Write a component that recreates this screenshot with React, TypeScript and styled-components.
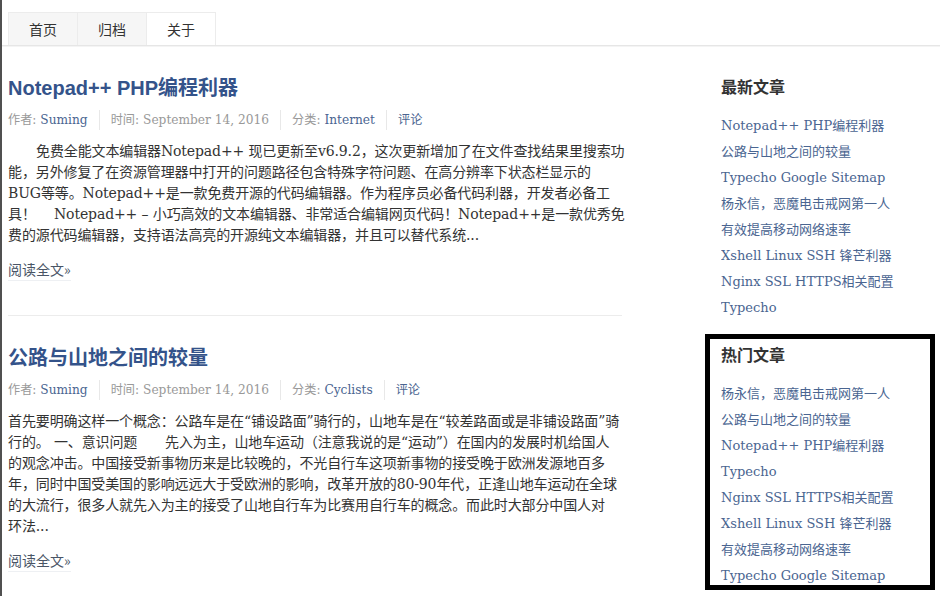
import styled, { createGlobalStyle } from 'styled-components';

const GlobalStyle = createGlobalStyle`
  html, body {
    margin: 0;
    padding: 0;
    background: #fff;
  }
  body {
    border-left: 2px solid #505050;
    font-family: "Liberation Serif", "Noto Sans CJK SC", serif;
    color: #333;
  }
  a {
    text-decoration: none;
  }
`;

const Page = styled.div`
  min-height: 100vh;
  box-sizing: border-box;
  box-shadow: inset 0 -3px 0 #8c8c8c;
`;

const NavBar = styled.div`
  display: flex;
  padding: 12px 0 0 6px;
  border-bottom: 1px solid #e6e6e6;
  box-shadow: 0 1px 0 #f4f4f4;
`;

const Tab = styled.a<{ $active?: boolean }>`
  display: block;
  width: 68px;
  height: 32px;
  line-height: 33px;
  text-align: center;
  font-family: "Noto Sans CJK SC", sans-serif;
  font-size: 14px;
  color: #333;
  background: ${p => (p.$active ? '#fff' : '#f6f6f6')};
  border: 1px solid #ececec;
  border-bottom: none;
  margin-right: -1px;
  margin-bottom: ${p => (p.$active ? '-1px' : '0')};
`;

const Layout = styled.div`
  display: flex;
  align-items: flex-start;
  padding-left: 6px;
`;

const Main = styled.main`
  width: 614px;
  flex-shrink: 0;
`;

const Post = styled.article<{ $divider?: boolean }>`
  padding: 27px 0 34px;
  border-bottom: ${p => (p.$divider ? '1px solid #ececec' : 'none')};
`;

const PostTitle = styled.h2`
  margin: 0;
  font-family: "Liberation Sans", "Noto Sans CJK SC", sans-serif;
  font-size: 20px;
  line-height: 30px;
  font-weight: bold;
  color: #34538a;
`;

const Meta = styled.div`
  display: flex;
  margin-top: 7px;
  font-family: "DejaVu Serif", "Noto Sans CJK SC", serif;
  font-size: 12.2px;
  line-height: 20px;
  color: #999;
`;

const MetaItem = styled.span`
  padding: 0 11px;
  border-left: 1px solid #e8e8e8;

  &:first-child {
    padding-left: 0;
    border-left: none;
  }
`;

const MetaLink = styled.a`
  color: #4a6591;
`;

const Excerpt = styled.p`
  margin: 11px 0 0;
  font-family: "DejaVu Serif", "Noto Sans CJK SC", serif;
  font-size: 14px;
  line-height: 21px;
  letter-spacing: -0.12px;
  color: #333;
`;

// the excerpt is stored pre-wrapped, one entry per line
const ExcerptLine = styled.span<{ $indent?: boolean }>`
  display: block;
  white-space: pre;
  padding-left: ${p => (p.$indent ? '28px' : '0')};
`;

const ReadMore = styled.a`
  display: inline-block;
  margin-top: 13px;
  font-family: "Noto Sans CJK SC", sans-serif;
  font-size: 14px;
  line-height: 21px;
  color: #4a5566;
  border-bottom: 1px solid #eef0f3;
`;

const Sidebar = styled.aside`
  margin-left: 99px;
  width: 210px;
`;

const Widget = styled.section<{ $boxed?: boolean }>`
  box-sizing: border-box;
  margin-left: ${p => (p.$boxed ? '-16px' : '0')};
  margin-top: ${p => (p.$boxed ? '13px' : '29px')};
  width: ${p => (p.$boxed ? '230px' : 'auto')};
  height: ${p => (p.$boxed ? '256px' : 'auto')};
  padding: ${p => (p.$boxed ? '4px 0 0 11px' : '0')};
  border: ${p => (p.$boxed ? '5px solid #000' : 'none')};
  overflow: hidden;
`;

const WidgetTitle = styled.h3`
  margin: 0 0 16px;
  font-family: "Noto Sans CJK SC", sans-serif;
  font-size: 16px;
  line-height: 22px;
  font-weight: bold;
  color: #333;
`;

const LinkList = styled.ul`
  list-style: none;
  margin: 0;
  padding: 0;
`;

const LinkItem = styled.li`
  height: 26px;
  font-family: "DejaVu Serif", "Noto Sans CJK SC", serif;
  font-size: 13px;
  line-height: 26px;
  white-space: nowrap;
`;

const SideLink = styled.a`
  color: #4a6591;
`;

const tabs = [
  { label: '首页' },
  { label: '归档' },
  { label: '关于', active: true },
];

const posts = [
  {
    title: 'Notepad++ PHP编程利器',
    category: 'Internet',
    indent: true,
    lines: [
      '免费全能文本编辑器Notepad++ 现已更新至v6.9.2，这次更新增加了在文件查找结果里搜索功',
      '能，另外修复了在资源管理器中打开的问题路径包含特殊字符问题、在高分辨率下状态栏显示的',
      'BUG等等。Notepad++是一款免费开源的代码编辑器。作为程序员必备代码利器，开发者必备工',
      '具！　 Notepad++ – 小巧高效的文本编辑器、非常适合编辑网页代码！Notepad++是一款优秀免',
      '费的源代码编辑器，支持语法高亮的开源纯文本编辑器，并且可以替代系统...',
    ],
  },
  {
    title: '公路与山地之间的较量',
    category: 'Cyclists',
    indent: false,
    lines: [
      '首先要明确这样一个概念：公路车是在“铺设路面”骑行的，山地车是在“较差路面或是非铺设路面”骑',
      '行的。 一、意识问题　　先入为主，山地车运动（注意我说的是“运动”）在国内的发展时机给国人',
      '的观念冲击。中国接受新事物历来是比较晚的，不光自行车这项新事物的接受晚于欧洲发源地百多',
      '年，同时中国受美国的影响远远大于受欧洲的影响，改革开放的80-90年代，正逢山地车运动在全球',
      '的大流行，很多人就先入为主的接受了山地自行车为比赛用自行车的概念。而此时大部分中国人对',
      '环法...',
    ],
  },
];

const recent = [
  'Notepad++ PHP编程利器',
  '公路与山地之间的较量',
  'Typecho Google Sitemap',
  '杨永信，恶魔电击戒网第一人',
  '有效提高移动网络速率',
  'Xshell Linux SSH 锋芒利器',
  'Nginx SSL HTTPS相关配置',
  'Typecho',
];

const popular = [
  '杨永信，恶魔电击戒网第一人',
  '公路与山地之间的较量',
  'Notepad++ PHP编程利器',
  'Typecho',
  'Nginx SSL HTTPS相关配置',
  'Xshell Linux SSH 锋芒利器',
  '有效提高移动网络速率',
  'Typecho Google Sitemap',
];

export default function App() {
  return (
    <Page>
      <GlobalStyle />
      <NavBar>
        {tabs.map(t => (
          <Tab key={t.label} href="#" $active={t.active}>
            {t.label}
          </Tab>
        ))}
      </NavBar>

      <Layout>
        <Main>
          {posts.map((post, i) => (
            <Post key={post.title} $divider={i < posts.length - 1}>
              <PostTitle>{post.title}</PostTitle>
              <Meta>
                <MetaItem>
                  作者: <MetaLink href="#">Suming</MetaLink>
                </MetaItem>
                <MetaItem>时间: September 14, 2016</MetaItem>
                <MetaItem>
                  分类: <MetaLink href="#">{post.category}</MetaLink>
                </MetaItem>
                <MetaItem>
                  <MetaLink href="#">评论</MetaLink>
                </MetaItem>
              </Meta>
              <Excerpt>
                {post.lines.map((line, j) => (
                  <ExcerptLine key={j} $indent={post.indent && j === 0}>
                    {line}
                  </ExcerptLine>
                ))}
              </Excerpt>
              <ReadMore href="#">阅读全文»</ReadMore>
            </Post>
          ))}
        </Main>

        <Sidebar>
          <Widget>
            <WidgetTitle>最新文章</WidgetTitle>
            <LinkList>
              {recent.map(item => (
                <LinkItem key={item}>
                  <SideLink href="#">{item}</SideLink>
                </LinkItem>
              ))}
            </LinkList>
          </Widget>
          <Widget $boxed>
            <WidgetTitle>热门文章</WidgetTitle>
            <LinkList>
              {popular.map(item => (
                <LinkItem key={item}>
                  <SideLink href="#">{item}</SideLink>
                </LinkItem>
              ))}
            </LinkList>
          </Widget>
        </Sidebar>
      </Layout>
    </Page>
  );
}
